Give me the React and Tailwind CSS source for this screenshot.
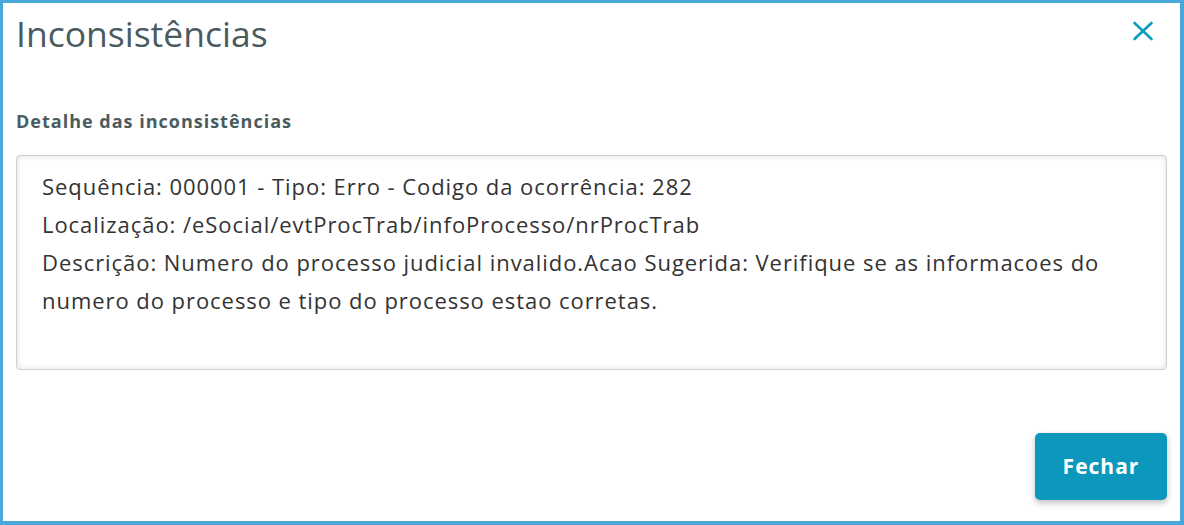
export default function App() {
  return (
    <div className="w-[1184px] h-[525px] bg-[#4aa8d8] pl-[3px] pt-[3px] pr-[4px] pb-[4px]" style={{ fontFamily: "'Open Sans', 'Noto Sans', sans-serif" }}>
      <div className="w-full h-full bg-white flex flex-col px-[13px]">
        <div className="flex items-center justify-between h-[62px]">
          <h1 className="text-[35.5px] text-[#4a5b5f] font-normal">Inconsistências</h1>
          <button className="mr-[13px] mb-[6px] text-[#0d9cc0]">
            <svg width="22" height="22" viewBox="0 0 22 22" fill="none" stroke="currentColor" strokeWidth="2.6" strokeLinecap="round">
              <path d="M2.5 3 L19.5 19 M19.5 3 L2.5 19" />
            </svg>
          </button>
        </div>
        <div className="mt-[45px] text-[18px] font-bold text-[#4a5b5f] leading-[22px] tracking-[1px]">Detalhe das inconsistências</div>
        <div className="mt-[23px] h-[215px] border border-[#cfcfcf] rounded-[4px] shadow-[inset_0_0_6px_rgba(0,0,0,0.12)] px-[25px] pt-[11px] text-[22px] leading-[38px] tracking-[0.95px] text-[#333]">
          <div>Sequência: 000001 - Tipo: Erro - Codigo da ocorrência: 282</div>
          <div>Localização: /eSocial/evtProcTrab/infoProcesso/nrProcTrab</div>
          <div>Descrição: Numero do processo judicial invalido.Acao Sugerida: Verifique se as informacoes do numero do processo e tipo do processo estao corretas.</div>
        </div>
        <div className="flex justify-end mt-[63px]">
          <button className="w-[132px] h-[67px] bg-[#0c98bc] rounded-[5px] text-white text-[21px] font-bold tracking-[1px] shadow-[0_3px_6px_rgba(0,0,0,0.25)]">Fechar</button>
        </div>
      </div>
    </div>
  );
}
